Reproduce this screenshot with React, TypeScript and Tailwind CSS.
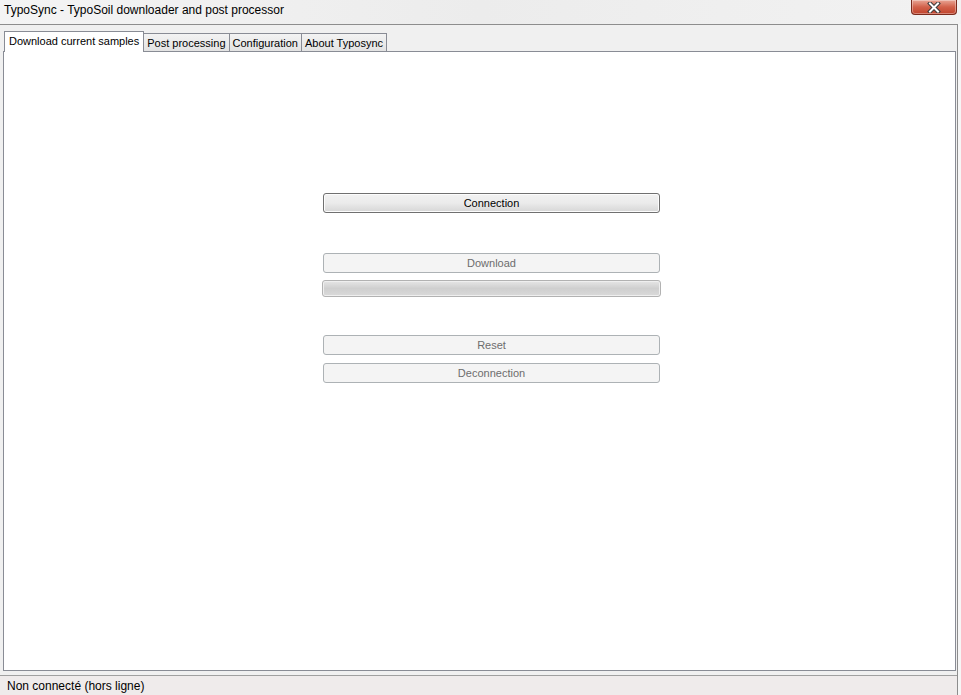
import React, { useState } from "react";

const font = { fontFamily: '"Liberation Sans", Arial, sans-serif' };

const tabs = ["Download current samples", "Post processing", "Configuration", "About Typosync"];

function CloseButton() {
  return (
    <div className="w-[46px] h-[15px] rounded-b-[4px] border border-t-0 border-[#7a2a1c] bg-gradient-to-b from-[#e8a595] via-[#d2614a] to-[#c0432c] flex items-center justify-center shadow-[inset_0_0_0_1px_rgba(255,255,255,0.35)]">
      <svg width="14" height="11" viewBox="0 0 14 11">
        <path
          d="M3 1.5 L11 9.5 M11 1.5 L3 9.5"
          stroke="#3b3b3b"
          strokeWidth="4"
          strokeLinecap="square"
        />
        <path
          d="M3 1.5 L11 9.5 M11 1.5 L3 9.5"
          stroke="#ffffff"
          strokeWidth="2"
          strokeLinecap="square"
        />
      </svg>
    </div>
  );
}

function WinButton({ label, enabled = false }: { label: string; enabled?: boolean }) {
  return (
    <div
      className={
        enabled
          ? "ml-[319px] w-[337px] h-[20px] rounded-[3px] border border-[#707070] bg-gradient-to-b from-[#f2f2f2] via-[#ebebeb] to-[#d6d6d6] flex items-center justify-center text-[11px] text-black shadow-[inset_0_0_0_1px_#fcfcfc]"
          : "ml-[319px] w-[337px] h-[20px] rounded-[3px] border border-[#adb2b5] bg-[#f4f4f4] flex items-center justify-center text-[11px] text-[#6d6d6d]"
      }
    >
      {label}
    </div>
  );
}

export default function App() {
  const [active, setActive] = useState(0);

  return (
    <div className="w-[961px] h-[695px] flex flex-col bg-[#f6f6f6] overflow-hidden" style={font}>
      {/* title bar */}
      <div className="h-[24px] flex justify-between bg-gradient-to-r from-[#f4f4f4] via-[#ececec] to-[#f2f2f2]">
        <div className="pl-[4px] pt-[3px] text-[12px] leading-[15px] text-black">
          TypoSync - TypoSoil downloader and post processor
        </div>
        <div className="mr-[4px]">
          <CloseButton />
        </div>
      </div>

      {/* client area */}
      <div className="flex-1 w-[958px] flex flex-col border-t border-r border-[#8d8d8d] bg-[#f0f0f0]">
        <div className="flex-1 flex flex-col pl-[3px] pr-[1px] pt-[5px] pb-[4px]">
          <div className="flex items-end h-[21px] pl-[1px] relative z-10">
            {tabs.map((t, i) =>
              i === active ? (
                <div
                  key={t}
                  onClick={() => setActive(i)}
                  className="h-[21px] -mb-px px-[4px] bg-white border border-b-0 border-[#898c95] text-[11px] leading-[18px] text-black"
                >
                  {t}
                </div>
              ) : (
                <div
                  key={t}
                  onClick={() => setActive(i)}
                  className="h-[18px] -ml-px px-[3px] bg-gradient-to-b from-[#f3f3f3] to-[#e3e3e3] border border-b-0 border-[#898c95] text-[11px] leading-[18px] text-black first:ml-0"
                >
                  {t}
                </div>
              )
            )}
          </div>

          {/* tab page */}
          <div className="flex-1 bg-white border border-[#898c95] pt-[141px]">
            <WinButton label="Connection" enabled />
            <div className="mt-[40px]">
              <WinButton label="Download" />
            </div>
            <div className="mt-[7px] ml-[318px] w-[339px] h-[17px] rounded-[3px] border border-[#b2b2b2] bg-gradient-to-b from-[#e6e6e6] via-[#cfcfcf] to-[#dadada] shadow-[inset_0_0_0_1px_#efefef]" />
            <div className="mt-[38px]">
              <WinButton label="Reset" />
            </div>
            <div className="mt-[8px]">
              <WinButton label="Deconnection" />
            </div>
          </div>
        </div>

        {/* status bar */}
        <div className="h-[20px] border-t border-[#a0a0a0] bg-[#efebeb] pl-[7px] text-[12px] leading-[20px] text-black">
          Non connecté (hors ligne)
        </div>
      </div>
    </div>
  );
}
